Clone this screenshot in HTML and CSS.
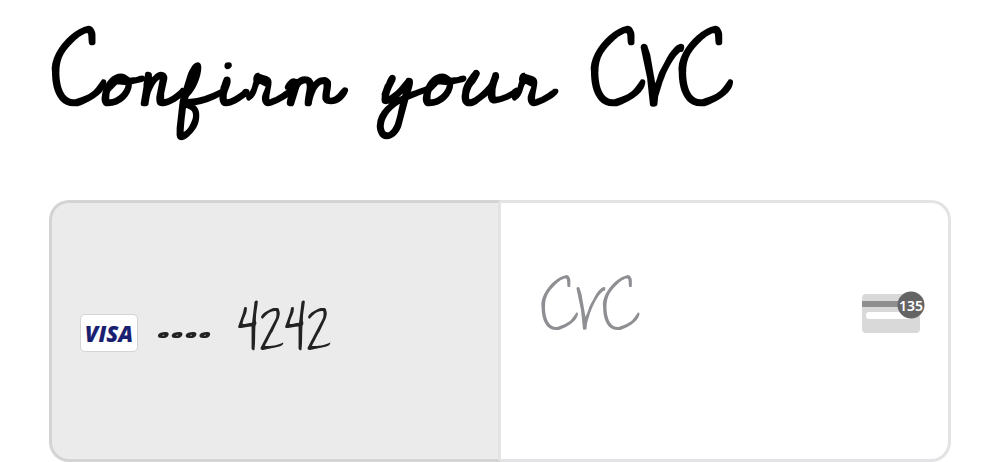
FILE: index.html
```html
<!DOCTYPE html>
<html lang="en">
<head>
<meta charset="utf-8">
<title>Confirm your CVC</title>
<link rel="stylesheet" href="styles.css">
</head>
<body>
<main class="page">
  <h1 class="title">Confirm your CVC</h1>
  <form class="card-form">
    <div class="card-summary">
      <span class="brand">VISA</span>
      <span class="digits">···· 4242</span>
    </div>
    <div class="cvc-field">
      <input class="cvc-input" type="text" inputmode="numeric" aria-label="CVC" placeholder="CVC">
      <svg class="cvc-icon" viewBox="0 0 64 42" aria-hidden="true">
        <rect x="0" y="3" width="58" height="39" rx="4" fill="#d9d9d9"/>
        <rect x="0" y="10" width="58" height="6" fill="#8f8f8f"/>
        <rect x="4" y="21" width="46" height="7" rx="3" fill="#fff"/>
        <circle cx="49" cy="14" r="13.5" fill="#646464"/>
        <text class="cvc-icon-text" x="49" y="20" text-anchor="middle">135</text>
      </svg>
    </div>
  </form>
</main>
</body>
</html>
```
FILE: styles.css
```css
* {
  box-sizing: border-box;
}

body {
  margin: 0;
  background: #fff;
  font-family: "Cedarville Cursive", Lato, cursive;
}

.page {
  padding: 0 49px;
}

.title {
  margin: 0;
  padding: 20px 2px 60px;
  font-size: 84px;
  line-height: 120px;
  font-weight: 700;
  color: #000;
}

.card-form {
  display: grid;
  grid-template-columns: minmax(0, 452fr) minmax(0, 450fr);
  min-height: 262px;
}

.card-summary {
  display: flex;
  align-items: center;
  padding: 4px 28px 0;
  background: #ebebeb;
  border: 3px solid #d4d4d4;
  border-right-color: #e3e3e5;
  border-radius: 20px 0 0 20px;
}

.brand {
  width: 58px;
  border: 1px solid #d4d4d4;
  border-radius: 5px;
  background: #fff;
  color: #1a1f71;
  font: italic 800 22px/36px "Open Sans", sans-serif;
  text-align: center;
}

.digits {
  margin-left: 18px;
  padding-bottom: 2px;
  font-size: 59px;
  line-height: 60px;
  color: #222;
  white-space: nowrap;
}

.cvc-field {
  display: flex;
  align-items: center;
  padding: 0 22px 38px 39px;
  border: 3px solid #e3e3e5;
  border-left: 0;
  border-radius: 0 20px 20px 0;
}

.cvc-input {
  flex: 1;
  min-width: 0;
  padding: 0;
  border: 0;
  outline: 0;
  background: transparent;
  font-family: inherit;
  font-size: 59px;
  line-height: 88px;
  color: #222;
}

.cvc-input::placeholder {
  color: #8e8e93;
  opacity: 1;
}

.cvc-icon {
  width: 64px;
  height: 42px;
}

.cvc-icon-text {
  font: 600 14px "Noto Sans", sans-serif;
  fill: #fff;
}
```
